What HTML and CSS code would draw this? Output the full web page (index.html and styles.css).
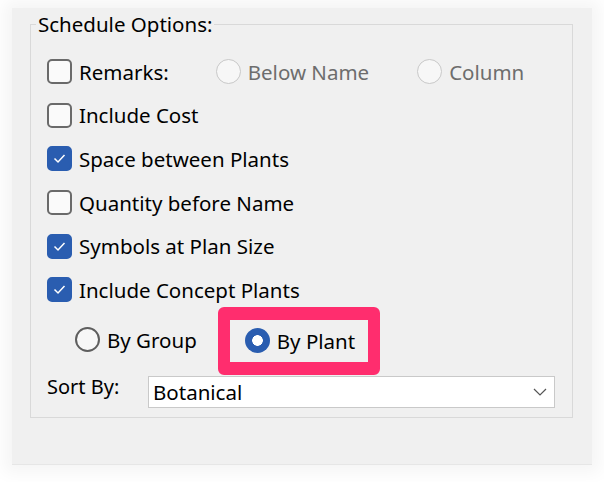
FILE: index.html
```html
<!DOCTYPE html>
<html>
<head>
<meta charset="utf-8">
<link rel="stylesheet" href="styles.css">
</head>
<body>
<div class="panel">
  <fieldset class="group">
    <legend class="legend">Schedule Options:</legend>
    <div class="row">
      <span class="cb"></span><span class="lbl">Remarks:</span>
      <span class="rb rb-dis first-dis"></span><span class="lbl dis">Below Name</span>
      <span class="rb rb-dis second-dis"></span><span class="lbl dis">Column</span>
    </div>
    <div class="row"><span class="cb"></span><span class="lbl">Include Cost</span></div>
    <div class="row"><span class="cb on"><svg viewBox="0 0 25 25"><path d="M7.5 12.5 L11 16 L17.5 9" /></svg></span><span class="lbl">Space between Plants</span></div>
    <div class="row"><span class="cb"></span><span class="lbl">Quantity before Name</span></div>
    <div class="row"><span class="cb on"><svg viewBox="0 0 25 25"><path d="M7.5 12.5 L11 16 L17.5 9" /></svg></span><span class="lbl">Symbols at Plan Size</span></div>
    <div class="row"><span class="cb on"><svg viewBox="0 0 25 25"><path d="M7.5 12.5 L11 16 L17.5 9" /></svg></span><span class="lbl">Include Concept Plants</span></div>
    <div class="radio-row">
      <span class="rb"></span><span class="lbl">By Group</span>
      <div class="highlight">
        <span class="rb rb-on"></span><span class="lbl">By Plant</span>
      </div>
    </div>
    <div class="sort-row">
      <span class="sort-lbl">Sort By:</span>
      <div class="select">
        <span>Botanical</span>
        <svg class="chev" viewBox="0 0 14 8"><path d="M1 1 L7 7 L13 1" /></svg>
      </div>
    </div>
  </fieldset>
</div>
</body>
</html>
```
FILE: styles.css
```css
html, body {
  margin: 0;
  padding: 0;
  background: #ffffff;
}
body {
  width: 604px;
  height: 482px;
  overflow: hidden;
  font-family: "Noto Sans", "Open Sans", sans-serif;
  color: #000;
}
.panel {
  margin: 8px 12px 0 12px;
  height: 457px;
  background: #f0f0f0;
  box-shadow: 0 0 16px 8px rgba(0, 0, 0, 0.045);
  border-bottom: 1px solid #e6e6e6;
  padding-top: 1px;
  box-sizing: border-box;
}
.group {
  margin: 3px 0 0 18px;
  width: 543px;
  box-sizing: border-box;
  border: 1px solid #d9d9d9;
  padding: 14px 17px 9px 16px;
}
.legend {
  font-size: 20.5px;
  padding: 0 2px;
  margin-left: -11px;
  line-height: 24px;
}
.row {
  display: flex;
  align-items: center;
  height: 43.6px;
}
.cb {
  width: 25px;
  height: 25px;
  box-sizing: border-box;
  border: 2px solid #6a6a6a;
  border-radius: 5px;
  background: #fafafa;
  flex: none;
  display: flex;
}
.cb.on {
  background: #2a5db0;
  border-color: #2a5db0;
}
.cb svg {
  width: 25px;
  height: 25px;
  margin: -2px;
}
.cb svg path {
  fill: none;
  stroke: #fff;
  stroke-width: 1.5;
}
.lbl {
  font-size: 20.5px;
  margin-left: 7px;
  line-height: 24px;
  white-space: nowrap;
}
.lbl.dis {
  color: #6d6d6d;
}
.rb {
  width: 25px;
  height: 25px;
  box-sizing: border-box;
  border-radius: 50%;
  border: 2px solid #5e5e5e;
  background: #f7f7f7;
  flex: none;
}
.rb-dis {
  border-color: #c8c8c8;
  border-width: 1.5px;
}
.first-dis {
  margin-left: 47px;
}
.second-dis {
  margin-left: 48px;
}
.rb-on {
  border: none;
  background: radial-gradient(circle, #ffffff 0 5px, #2a5db0 5.6px);
}
.radio-row {
  display: flex;
  align-items: center;
  height: 56px;
  padding-left: 28px;
}
.highlight {
  display: flex;
  align-items: center;
  margin-left: 21px;
  height: 68px;
  margin-bottom: -13px;
  margin-top: -11px;
  box-sizing: border-box;
  border: 13px solid #ff2d6e;
  border-left-width: 12px;
  border-right-width: 12px;
  border-radius: 6px;
  padding: 0 13px 0 15px;
  background: #f0f0f0;
}
.sort-row {
  display: flex;
  align-items: center;
  margin-top: 8px;
}
.sort-lbl {
  font-size: 20px;
  width: 101px;
  flex: none;
  line-height: 24px;
  margin-top: -9px;
}
.select {
  flex: 1;
  height: 32px;
  box-sizing: border-box;
  background: #fff;
  border: 1px solid #c9c9c9;
  display: flex;
  align-items: center;
  padding-left: 4px;
  padding-right: 7px;
  font-size: 20.5px;
}
.select span {
  flex: 1;
}
.chev {
  width: 14px;
  height: 8px;
}
.chev path {
  fill: none;
  stroke: #555;
  stroke-width: 1.2;
}
```
